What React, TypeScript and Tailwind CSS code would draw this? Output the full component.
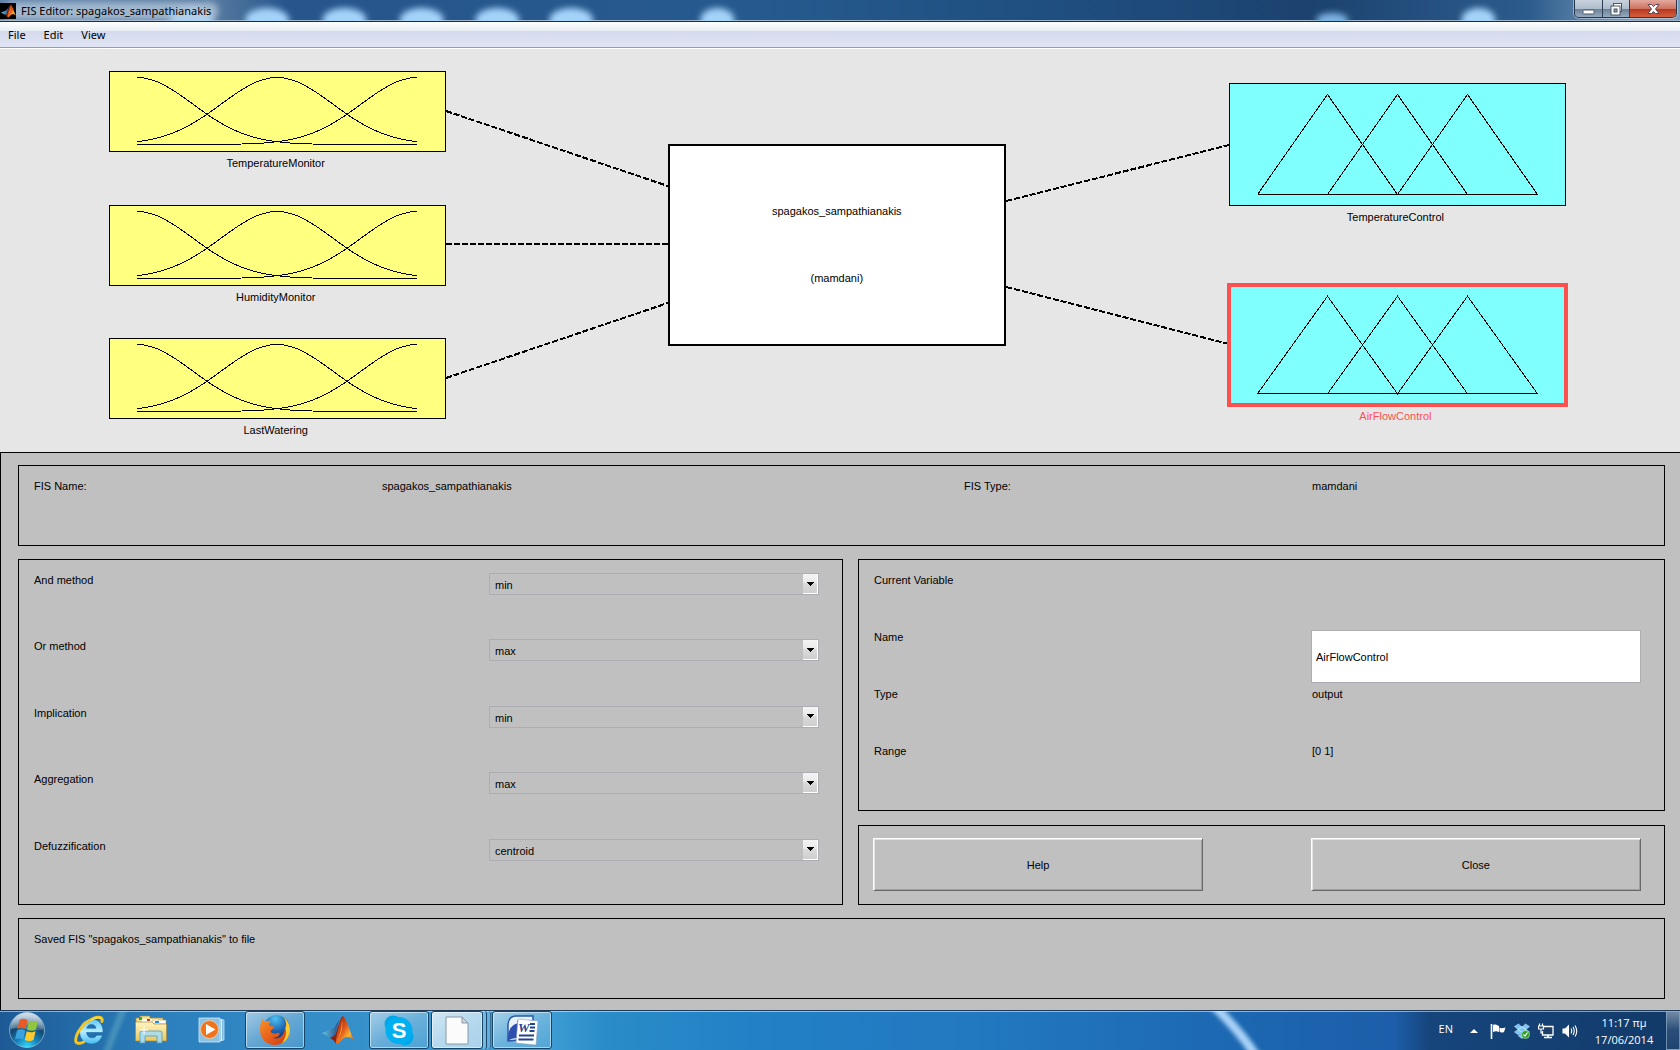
import React, { useId, useState } from "react";

type FisVariable = { name: string; top: string; height: string; kind: "input" | "output" };

const INPUTS: FisVariable[] = [
  { name: "TemperatureMonitor", top: "top-[22px]", height: "h-[81px]", kind: "input" },
  { name: "HumidityMonitor", top: "top-[156px]", height: "h-[81px]", kind: "input" },
  { name: "LastWatering", top: "top-[289px]", height: "h-[81px]", kind: "input" },
];

const OUTPUTS: FisVariable[] = [
  { name: "TemperatureControl", top: "top-[34px]", height: "h-[123px]", kind: "output" },
  { name: "AirFlowControl", top: "top-[236px]", height: "h-[120px]", kind: "output" },
];

const METHODS = [
  { label: "And method", value: "min", options: ["min", "prod"] },
  { label: "Or method", value: "max", options: ["max", "probor"] },
  { label: "Implication", value: "min", options: ["min", "prod"] },
  { label: "Aggregation", value: "max", options: ["max", "sum", "probor"] },
  { label: "Defuzzification", value: "centroid", options: ["centroid", "bisector", "mom", "lom", "som"] },
];

const LINKS = [
  { x1: "26.55%", y1: 62, x2: "39.75%", y2: 137 },
  { x1: "26.55%", y1: 195, x2: "39.75%", y2: 195 },
  { x1: "26.55%", y1: 329, x2: "39.75%", y2: 254 },
  { x1: "59.9%", y1: 152, x2: "73.15%", y2: 96 },
  { x1: "59.9%", y1: 238, x2: "73.15%", y2: 295 },
];

function gaussian(center: number) {
  const points: string[] = [];
  for (let x = 28; x <= 308; x += 7) {
    const d = x - center;
    const y = 73.5 - 67 * Math.exp(-(d * d) / (2 * 55.5 * 55.5));
    points.push(`${x},${y.toFixed(1)}`);
  }
  return points.join(" ");
}

function GaussianCurves() {
  return (
    <svg className="block size-full" viewBox="1 1 335 79" preserveAspectRatio="none" fill="none" stroke="#000" shapeRendering="crispEdges" aria-hidden="true">
      {[28, 168, 308].map((c) => (
        <polyline key={c} points={gaussian(c)} vectorEffect="non-scaling-stroke" />
      ))}
    </svg>
  );
}

function TriangleCurves() {
  return (
    <svg className="block size-full" viewBox="1 1 335 121" preserveAspectRatio="none" fill="none" stroke="#000" shapeRendering="crispEdges" aria-hidden="true">
      <path d="M28.5 111.5L98.5 11.5L168.5 111.5L238.5 11.5L308.5 111.5M98.5 111.5L168.5 11.5L238.5 111.5M28.5 111.5H308.5" vectorEffect="non-scaling-stroke" />
    </svg>
  );
}

function VariableNode({ v, selected }: { v: FisVariable; selected: boolean }) {
  const side = v.kind === "input" ? "left-[6.5%]" : "left-[73.15%]";
  const fill = v.kind === "input" ? "bg-[#ffff80]" : "bg-[#80ffff]";
  return (
    <div className={`absolute w-[calc(20%+1px)] ${side} ${v.top}`}>
      <button
        type="button"
        aria-label={v.name}
        className={`block w-full border border-black ${v.height} ${fill} ${selected ? "outline-4 -outline-offset-2 outline-[#ff5050]" : ""}`}
      >
        {v.kind === "input" ? <GaussianCurves /> : <TriangleCurves />}
      </button>
      <div className={`mt-[3px] pr-1 text-center leading-4 ${selected ? "text-[#ff5050]" : ""}`}>{v.name}</div>
    </div>
  );
}

function MatlabMark({ className }: { className: string }) {
  return (
    <svg className={className} viewBox="0 0 32 30" aria-hidden="true">
      <defs>
        <linearGradient id="mlOrange" x1="0" y1="0" x2="1" y2="1">
          <stop offset="0" stopColor="#7a1c10" />
          <stop offset="0.45" stopColor="#e2551a" />
          <stop offset="0.7" stopColor="#f9b233" />
          <stop offset="1" stopColor="#c23a12" />
        </linearGradient>
        <linearGradient id="mlBlue" x1="0" y1="0" x2="1" y2="0">
          <stop offset="0" stopColor="#5fc3e0" />
          <stop offset="1" stopColor="#2a4c8a" />
        </linearGradient>
      </defs>
      <path d="M0 18L10 14C13 13 14 9 17 5L13 21L8 23Z" fill="url(#mlBlue)" />
      <path d="M8 23L13 20C16 14 18 2 21 1C19 9 17 19 14 29C12 25 10 24 8 23Z" fill="#8c2312" />
      <path d="M21 1C24 3 27 14 32 25C28 22 25 21 22 23C19 25 17 29 14 29C13 27 18 3 21 1Z" fill="url(#mlOrange)" />
      <path d="M20 5C20 12 18 20 15 26C19 21 21 12 20 5Z" fill="#ffc63c" opacity="0.8" />
    </svg>
  );
}

function TitleBar() {
  return (
    <header className="relative flex h-[22px] items-start overflow-hidden border-b border-[#1c2c44] bg-[linear-gradient(90deg,#5f82a8_0%,#54799f_13%,#27558c_17%,#265a8e_45%,#1f4f80_62%,#1c426f_78%,#2c5c8c_91%,#7c9cba_97%)]">
      <div aria-hidden="true" className="absolute inset-x-0 bottom-0 h-px bg-[#9db4cc]" />
      <svg aria-hidden="true" className="absolute inset-0 h-full w-full">
        <defs>
          <filter id="soft" x="-30%" y="-60%" width="160%" height="220%">
            <feGaussianBlur stdDeviation="3" />
          </filter>
        </defs>
        <g filter="url(#soft)" fill="#a4d3fa">
          <ellipse cx="11.4%" cy="20" rx="22" ry="12" />
          <ellipse cx="15.9%" cy="20" rx="22" ry="12" />
          <ellipse cx="20.5%" cy="20" rx="22" ry="12" />
          <ellipse cx="25.1%" cy="20" rx="22" ry="12" />
          <ellipse cx="29.6%" cy="20" rx="22" ry="12" />
          <ellipse cx="34%" cy="20" rx="22" ry="12" />
          <ellipse cx="42.7%" cy="20" rx="17" ry="12" />
          <ellipse cx="79.3%" cy="20" rx="16" ry="7" fill="#7db4e4" />
          <ellipse cx="88%" cy="20" rx="17" ry="12" />
        </g>
        <rect x="4" y="2" width="214" height="18" rx="8" fill="#b9cbdd" opacity="0.75" filter="url(#soft)" />
      </svg>
      <div className="relative mt-[3px] flex h-4 items-center gap-[5px]">
        <span className="grid size-4 place-items-center bg-black">
          <MatlabMark className="h-3.5 w-[15px]" />
        </span>
        <h1 className="font-['Noto_Sans',sans-serif] text-[11px] leading-4 text-black">FIS Editor: spagakos_sampathianakis</h1>
      </div>
      <div className="relative mr-[3px] ml-auto flex h-[18px] overflow-hidden rounded-b-[5px] border border-t-0 border-[#26364c] ring-1 ring-white/40">
        <button type="button" aria-label="Minimize" className="grid w-7 place-items-center border-r border-[#2c3c52] bg-[linear-gradient(180deg,#c9d3de_0%,#aebccb_50%,#6b8097_52%,#95aabf_100%)]">
          <svg width="13" height="14" viewBox="0 0 13 14"><rect x="1" y="8" width="11" height="4" rx="0.5" fill="#fff" stroke="#4b5868" /></svg>
        </button>
        <button type="button" aria-label="Restore" className="grid w-[27px] place-items-center border-r border-[#2c3c52] bg-[linear-gradient(180deg,#c9d3de_0%,#aebccb_50%,#6b8097_52%,#95aabf_100%)]">
          <svg width="13" height="14" viewBox="0 0 13 14">
            <rect x="3.5" y="1.5" width="8" height="8" fill="#fff" stroke="#4b5868" />
            <rect x="1" y="4" width="9" height="9" fill="#fff" stroke="#4b5868" />
            <rect x="4" y="7" width="3" height="3" fill="#8a9bb0" stroke="#4b5868" />
          </svg>
        </button>
        <button type="button" aria-label="Close window" className="grid w-[46px] place-items-center bg-[linear-gradient(180deg,#e3a89c_0%,#cf7463_50%,#b8341c_52%,#d4603f_100%)]">
          <svg width="13" height="12" viewBox="0 0 13 12"><path d="M1 1.5H4.5L6.5 3.5L8.500 1.5H12L8.500 6L12 10.500H8.500L6.500 8.500L4.500 10.500H1L4.500 6Z" fill="#fff" stroke="#5b4450" /></svg>
        </button>
      </div>
    </header>
  );
}

function MenuBar() {
  return (
    <nav aria-label="Main menu" className="h-[27px] border-b border-white">
      <div className="flex h-full items-center gap-[18px] border-b border-[#9a9aa4] bg-[linear-gradient(180deg,#ffffff_0%,#e7edf4_36%,#d4daec_37%,#e0e5f5_100%)] pl-2">
        {["File", "Edit", "View"].map((m) => (
          <button key={m} type="button" className="font-['Noto_Sans',sans-serif] text-[11px] leading-4 text-black">
            {m}
          </button>
        ))}
      </div>
    </nav>
  );
}

function Diagram() {
  return (
    <section aria-label="System diagram" className="relative h-[403px] bg-[#e6e6e6]">
      <svg className="absolute inset-0 h-full w-full" aria-hidden="true" stroke="#000" strokeWidth="2" strokeDasharray="6 2" shapeRendering="crispEdges">
        {LINKS.map((l) => (
          <line key={l.y1} {...l} />
        ))}
      </svg>
      {INPUTS.map((v) => (
        <VariableNode key={v.name} v={v} selected={false} />
      ))}
      <button type="button" className="absolute top-[95px] left-[39.75%] flex h-[202px] w-[calc(20%+2px)] flex-col items-center justify-center gap-[51px] border-2 border-black bg-white pb-0.5 leading-4">
        <span>spagakos_sampathianakis</span>
        <span>(mamdani)</span>
      </button>
      {OUTPUTS.map((v) => (
        <VariableNode key={v.name} v={v} selected={v.name === "AirFlowControl"} />
      ))}
    </section>
  );
}

function MethodRow({ label, value, options }: (typeof METHODS)[number]) {
  const id = useId();
  const [current, setCurrent] = useState(value);
  return (
    <div className="grid grid-cols-[455fr_330fr] items-start">
      <label htmlFor={id}>{label}</label>
      <div className="relative mt-px">
        <select
          id={id}
          value={current}
          onChange={(e) => setCurrent(e.target.value)}
          className="block h-[22px] w-full appearance-none border border-[#adadb3] bg-[#c0c0c0] pt-0.5 pr-4 pl-[5px] leading-4 text-black"
        >
          {options.map((o) => (
            <option key={o}>{o}</option>
          ))}
        </select>
        <span aria-hidden="true" className="pointer-events-none absolute top-px right-px grid h-5 w-[15px] place-items-center border-r border-b border-white bg-[linear-gradient(180deg,#f4f4f4_0%,#e8e8e8_49%,#dadada_50%,#cfcfcf_100%)]">
          <svg width="7" height="4" viewBox="0 0 7 4" shapeRendering="crispEdges"><path d="M0 0H7L3.500 4Z" /></svg>
        </span>
      </div>
    </div>
  );
}

const FRAME = "border border-black";
const PUSH =
  "h-[53px] w-[43%] border border-t-white border-l-white border-r-[#696969] border-b-[#696969] bg-[#c0c0c0] shadow-[inset_1px_1px_0_#e3e3e3,inset_-1px_-1px_0_#a0a0a0]";

function ControlPanel() {
  const [name, setName] = useState("AirFlowControl");
  return (
    <main className="flex flex-1 flex-col gap-[13px] border-t border-l border-black bg-[#c0c0c0] pt-3 pr-[15px] pb-[11px] pl-[17px] leading-4">
      <dl className={`${FRAME} grid h-[81px] grid-cols-[348fr_582fr_348fr_338fr] pt-3 pr-3.5 pl-[15px]`}>
        <dt>FIS Name:</dt>
        <dd>spagakos_sampathianakis</dd>
        <dt>FIS Type:</dt>
        <dd>mamdani</dd>
      </dl>
      <div className="grid h-[346px] grid-cols-[825fr_807fr] gap-[15px]">
        <section aria-label="Methods" className={`${FRAME} grid grid-rows-5 pt-3 pr-[23px] pl-[15px]`}>
          {METHODS.map((m) => (
            <MethodRow key={m.label} {...m} />
          ))}
        </section>
        <div className="flex flex-col gap-3.5">
          <section aria-label="Current Variable" className={`${FRAME} grid flex-1 grid-cols-[437fr_330fr] grid-rows-4 pt-3 pr-[23px] pb-2.5 pl-[15px]`}>
            <h2 className="col-span-2">Current Variable</h2>
            <label htmlFor="variable-name">Name</label>
            <input
              id="variable-name"
              value={name}
              onChange={(e) => setName(e.target.value)}
              className="mt-px h-[53px] w-full border border-[#abadb3] bg-white px-1 text-black"
            />
            <span>Type</span>
            <span className="pl-px">output</span>
            <span>Range</span>
            <span className="pl-px">[0 1]</span>
          </section>
          <div className={`${FRAME} flex justify-between pt-3 pr-[23px] pb-[13px] pl-3.5`}>
            <button type="button" className={PUSH}>Help</button>
            <button type="button" className={PUSH}>Close</button>
          </div>
        </div>
      </div>
      <p role="status" className={`${FRAME} h-[81px] pt-3 pl-[15px]`}>
        Saved FIS "spagakos_sampathianakis" to file
      </p>
    </main>
  );
}

function StartOrb() {
  return (
    <svg width="38" height="38" viewBox="0 0 38 38" aria-hidden="true">
      <defs>
        <radialGradient id="orb" cx="0.5" cy="1" r="0.9">
          <stop offset="0" stopColor="#35e0ff" />
          <stop offset="0.35" stopColor="#1687bd" />
          <stop offset="0.7" stopColor="#12466f" />
          <stop offset="1" stopColor="#6e93b5" />
        </radialGradient>
        <linearGradient id="orbGloss" x1="0" y1="0" x2="0" y2="1">
          <stop offset="0" stopColor="#fff" stopOpacity="0.7" />
          <stop offset="1" stopColor="#fff" stopOpacity="0.15" />
        </linearGradient>
      </defs>
      <circle cx="19" cy="19" r="17.500" fill="url(#orb)" stroke="#9cc3dd" strokeOpacity="0.7" />
      <path d="M2.500 18A16.500 16.500 0 0 1 35.500 18C28 22 10 15 2.500 18Z" fill="url(#orbGloss)" />
      <path d="M11.500 9C14 7.200 16.500 7.500 19.500 9L17.500 18C15 16.300 12 16.200 9.500 18Z" fill="#ec5a24" />
      <path d="M21 9.700C24 11.300 27 11.300 30 9.500L28 18.500C25.500 20.200 22 20 19 18.500Z" fill="#8fc63d" />
      <path d="M9 19.500C11.500 17.800 14.500 18 17.200 19.500L15.200 28.500C12.500 27 9.500 27 7 28.500Z" fill="#39a3e0" />
      <path d="M18.700 20.200C21.500 21.700 25 21.700 27.600 20L25.600 28.700C23 30.500 19.500 30.400 16.700 29Z" fill="#fdc92c" />
    </svg>
  );
}

function ExplorerE() {
  return (
    <svg width="32" height="32" viewBox="0 0 32 32" aria-hidden="true">
      <defs>
        <linearGradient id="ieBlue" x1="0" y1="0" x2="0" y2="1">
          <stop offset="0" stopColor="#5fcaf8" />
          <stop offset="0.5" stopColor="#b5ecff" />
          <stop offset="1" stopColor="#45bdf4" />
        </linearGradient>
      </defs>
      <path d="M30 18.500H13.500C14 22 16 23.800 19 23.800C21.300 23.800 22.800 22.800 23.800 21.200H29.500C27.500 26.800 23.500 30 18.700 30C11.500 30 6.500 24.800 6.500 17.500C6.500 10.200 11.800 5 18.500 5C25.500 5 30.500 10.300 30 18.500ZM13.700 14.200H23C22.500 11.700 21 10.500 18.500 10.500C15.800 10.500 14.300 11.900 13.700 14.200Z" fill="url(#ieBlue)" stroke="#1769ad" strokeWidth="0.6" />
      <path d="M29 7.500C30 3.500 26 1.800 20 4.500C10 9 2.500 19.500 2.700 26.500C2.900 30 6.500 30 10.500 28" fill="none" stroke="#f7c61e" strokeWidth="3" strokeLinecap="round" />
      <path d="M28 4.500C26.500 2.500 22 4 18 6.500" fill="none" stroke="#fff08a" strokeWidth="0.900" />
    </svg>
  );
}

function FolderIcon() {
  return (
    <svg width="34" height="32" viewBox="0 0 34 32" aria-hidden="true">
      <defs>
        <linearGradient id="folder" x1="0" y1="0" x2="0" y2="1">
          <stop offset="0" stopColor="#fff4c2" />
          <stop offset="1" stopColor="#e8c95e" />
        </linearGradient>
      </defs>
      <path d="M2 4H6V2H16V4H29V10H2Z" fill="#f3df97" stroke="#a88a38" strokeWidth="0.700" />
      <path d="M5 3H8V6H5Z" fill="#1faf3a" />
      <path d="M8 5H24V9H8Z" fill="#fff" />
      <path d="M13 5H16V7H13Z" fill="#d8322a" />
      <path d="M18 6H32V10H18Z" fill="#fff" stroke="#a88a38" strokeWidth="0.500" />
      <path d="M21 7H25V9H21Z" fill="#1d8fe0" />
      <path d="M1.500 8H18L20 10H32.500V27H1.500Z" fill="url(#folder)" stroke="#a88a38" strokeWidth="0.700" />
      <path d="M6 29V18Q6 17 8 17H26Q28 17 28 19V29H23V22H11V29Z" fill="#a6dcf2" stroke="#4e9cc4" strokeWidth="0.800" fillOpacity="0.9" />
      <path d="M10 12V20M6 16H14" stroke="#fff" />
    </svg>
  );
}

function MediaPlayerIcon() {
  return (
    <svg width="30" height="28" viewBox="0 0 30 28" aria-hidden="true">
      <path d="M21 3L26 4V24L21 25Z" fill="#7dbbe2" stroke="#d4edfb" strokeWidth="0.700" />
      <path d="M1 2H22V26H1Z" fill="#8cc2e4" stroke="#cfe9f8" strokeWidth="0.800" />
      <path d="M23.500 3V25" stroke="#fff" strokeWidth="0.800" />
      <circle cx="11.500" cy="13.500" r="9" fill="#f1731c" stroke="#fbd0a0" strokeWidth="0.800" />
      <path d="M8 8L17.500 13.500L8 19Z" fill="#fff" />
    </svg>
  );
}

function FirefoxIcon() {
  return (
    <svg width="32" height="32" viewBox="0 0 32 32" aria-hidden="true">
      <defs>
        <radialGradient id="globe" cx="0.45" cy="0.15" r="0.8">
          <stop offset="0" stopColor="#4fc0f2" />
          <stop offset="0.6" stopColor="#1b62b0" />
          <stop offset="1" stopColor="#0e2c6a" />
        </radialGradient>
        <linearGradient id="fox" x1="0" y1="0" x2="1" y2="1">
          <stop offset="0" stopColor="#f5952a" />
          <stop offset="0.5" stopColor="#e85f1c" />
          <stop offset="1" stopColor="#c93a16" />
        </linearGradient>
      </defs>
      <circle cx="17.500" cy="14" r="13" fill="url(#globe)" />
      <path d="M28 9C31 13 31 19 29 23C26 28 21 31 16 31C8 31 1 25 1 16C1 11 2 8 3.500 4.500C4.500 5.500 5 6.500 5.500 7.500C7.500 6.500 10 6.500 12.500 7.500C10.500 8.500 10 10 10 11.500C12 12 14 12 15.500 13C14.500 15 12 15.500 11.500 17.500C12.500 19 15 20.500 18 19C20 18 21.500 19.500 20.500 21C19 23 16 24.500 13.500 23.500C18 26 24 23 25.500 17C26.300 14 26 12 28 9Z" fill="url(#fox)" />
      <path d="M24.500 3C31 8 33 17 28.500 24C27 26.500 25 28 23 29C26.500 24 28 20 26.500 14C28 11 27 6 24.500 3Z" fill="#fcc92f" />
    </svg>
  );
}

function SkypeIcon() {
  return (
    <svg width="30" height="31" viewBox="0 0 30 31" aria-hidden="true">
      <circle cx="9" cy="9" r="8.500" fill="#00a8e8" />
      <circle cx="21" cy="22" r="8.500" fill="#00a8e8" />
      <circle cx="15" cy="15.500" r="13.500" fill="#00aff0" />
      <text x="15" y="23" textAnchor="middle" fontFamily="Liberation Sans, sans-serif" fontWeight="700" fontSize="22" fill="#fff">S</text>
    </svg>
  );
}

function PageIcon() {
  return (
    <svg width="24" height="29" viewBox="0 0 24 29" aria-hidden="true">
      <path d="M1 1H17L23 7V28H1Z" fill="#fbfbfb" stroke="#8a98a4" />
      <path d="M17 1V7H23Z" fill="#d0d6dc" stroke="#8a98a4" />
    </svg>
  );
}

function WordIcon() {
  return (
    <svg width="32" height="32" viewBox="0 0 32 32" aria-hidden="true">
      <path d="M2 27V10Q3 2 10 2H27V7H12V26Z" fill="#e9f1fb" stroke="#2b57a8" strokeWidth="1.500" />
      <path d="M2 27Q1 12 12 9V24Q5 24 2 27Z" fill="#2f4fae" />
      <path d="M12 5L32 7L30 31L10 29Z" fill="#fff" stroke="#8ca2c0" strokeWidth="0.600" />
      <text x="12" y="18" fontFamily="Liberation Serif, serif" fontStyle="italic" fontWeight="700" fontSize="13" fill="#23428f">W</text>
      <path d="M24 10H29M24 13.500H29M23.500 17H28.500M13 21.500H28M12.500 25.500H27.500" stroke="#23428f" strokeWidth="1.800" />
    </svg>
  );
}

const TASK =
  "grid h-full place-items-center rounded-[3px] border border-[#174467] bg-linear-to-br from-white/55 via-white/25 to-white/10 shadow-[inset_0_0_0_1px_rgba(255,255,255,0.5)]";

function TaskBar() {
  return (
    <footer className="relative flex h-10 items-stretch overflow-hidden border-t border-[#1d3a58] bg-[linear-gradient(90deg,#1d5a95_0%,#2b80bd_10%,#3c9bd2_28%,#3c9bd2_33%,#2a8cc8_36%,#2280c6_45%,#2279c0_58%,#1c66b0_75%,#1c5da8_84%)] text-white">
      <svg aria-hidden="true" className="absolute inset-0 h-full w-full" viewBox="0 0 1680 39" preserveAspectRatio="none">
        <defs>
          <filter id="haze" x="-20%" y="-20%" width="140%" height="140%">
            <feGaussianBlur stdDeviation="2" />
          </filter>
          <linearGradient id="tray" x1="0" x2="1" y1="0" y2="0">
            <stop offset="0" stopColor="#16457c" stopOpacity="0" />
            <stop offset="0.12" stopColor="#16457c" />
            <stop offset="1" stopColor="#123a68" />
          </linearGradient>
        </defs>
        <path d="M124 -4L106 43" stroke="#7fc6cf" strokeWidth="6" opacity="0.4" filter="url(#haze)" />
        <path d="M1213 -6Q1240 20 1256 45" fill="none" stroke="#a9d2f8" strokeWidth="9" filter="url(#haze)" />
        <rect x="1395" width="285" height="39" fill="url(#tray)" />
      </svg>
      <div aria-hidden="true" className="absolute inset-x-0 top-0 h-px bg-white/50" />
      <div className="relative flex items-stretch pb-px pl-2">
        <button type="button" aria-label="Start" className="w-[38px]"><StartOrb /></button>
        <button type="button" aria-label="Internet Explorer" className="ml-[27px] grid w-8 place-items-center"><ExplorerE /></button>
        <button type="button" aria-label="Windows Explorer" className="ml-[29px] grid w-[34px] place-items-center"><FolderIcon /></button>
        <button type="button" aria-label="Media Player" className="ml-[30px] grid w-[30px] place-items-center"><MediaPlayerIcon /></button>
        <button type="button" aria-label="Firefox" className={`${TASK} ml-[17px] w-[60px]`}><FirefoxIcon /></button>
        <button type="button" aria-label="MATLAB" className="ml-4 grid w-[33px] place-items-center"><MatlabMark className="h-[30px] w-8" /></button>
        <button type="button" aria-label="Skype" className={`${TASK} ml-[15px] w-[60px]`}><SkypeIcon /></button>
        <button type="button" aria-label="Documents" className={`${TASK} ml-0.5 w-[52px] bg-white/50`}><PageIcon /></button>
        <span aria-hidden="true" className="w-1 rounded-r-[3px] border-r border-[#174467] bg-white/30" />
        <span aria-hidden="true" className="w-1 rounded-r-[3px] border-r border-[#174467]/60 bg-white/20" />
        <button type="button" aria-label="Word" className={`${TASK} ml-px w-[60px]`}><WordIcon /></button>
      </div>
      <div className="relative ml-auto flex items-center font-['Open_Sans',sans-serif] text-[11px] leading-[17px]">
        <span className="pb-1">EN</span>
        <button type="button" aria-label="Show hidden icons" className="ml-[17px] grid h-full w-2 place-items-center">
          <svg width="8" height="4" viewBox="0 0 8 4"><path d="M0 4L4 0L8 4Z" fill="#fff" /></svg>
        </button>
        <div className="ml-3 flex items-center gap-2">
          <svg width="16" height="16" viewBox="0 0 16 16" role="img" aria-label="Action Center">
            <path d="M1.500 1V16" stroke="#fff" strokeWidth="1.600" />
            <path d="M3 2C5 1 7 2 9 3V9C7 8 5 8 3 9Z" fill="#fff" />
            <path d="M9.500 4.500C11 6 13 5 15.500 4.500L14 9C12 10 10.500 9.500 9.500 8.500Z" fill="#fff" />
          </svg>
          <svg width="16" height="16" viewBox="0 0 16 16" role="img" aria-label="Dropbox">
            <path d="M4.500 1L8 4L4 6.500L0.500 3.500ZM11.500 1L8 4L12 6.500L15.500 3.500ZM0.500 9L4 6.500L8 9.500L4.500 12ZM15.500 9L12 6.500L8 9.500L11.500 12ZM4.500 13L8 10.500L11 13L8 15.500ZM8 4L12 6.500L8 9.500L4 6.500Z" fill="#7cc4f5" stroke="#d9f0ff" strokeWidth="0.500" />
            <circle cx="11.500" cy="11.500" r="4" fill="#2ea12f" stroke="#c5efbc" strokeWidth="0.600" />
            <path d="M9.500 11.500L11 13L13.500 9.500" stroke="#fff" strokeWidth="1.200" fill="none" />
          </svg>
          <svg width="16" height="16" viewBox="0 0 16 16" role="img" aria-label="Network">
            <path d="M5.500 3.500H15V12H4.500V8" fill="#1c3f66" stroke="#fff" strokeWidth="1.300" />
            <path d="M6 14.500H14M10 12V14" stroke="#fff" strokeWidth="1.600" />
            <path d="M1.500 0.500V3M4.500 0.500V3M0.500 3H5.500V6H0.500ZM3 6V10H5" stroke="#fff" strokeWidth="1.200" fill="none" />
          </svg>
          <svg width="16" height="16" viewBox="0 0 16 16" role="img" aria-label="Volume">
            <path d="M0.500 5.500H3L7 1.500V14.500L3 10.500H0.500Z" fill="#fff" />
            <path d="M9 5.500Q10.500 8 9 10.500M11 4Q13.500 8 11 12M13 2.500Q16.500 8 13 13.500" stroke="#fff" strokeWidth="1.100" fill="none" />
          </svg>
        </div>
        <time dateTime="2014-06-17T11:17" className="ml-3.5 flex w-16 flex-col items-center">
          <span>11:17 πμ</span>
          <span>17/06/2014</span>
        </time>
        <button type="button" aria-label="Show desktop" className="ml-2.5 h-full w-3.5 border border-[#8ba9c6]/70 bg-linear-to-b from-white/40 via-white/10 to-white/5" />
      </div>
    </footer>
  );
}

export default function App() {
  return (
    <div className="flex min-h-screen flex-col bg-[#c0c0c0] font-['Liberation_Sans',Arial,sans-serif] text-[11px] text-black">
      <TitleBar />
      <MenuBar />
      <Diagram />
      <ControlPanel />
      <TaskBar />
    </div>
  );
}
